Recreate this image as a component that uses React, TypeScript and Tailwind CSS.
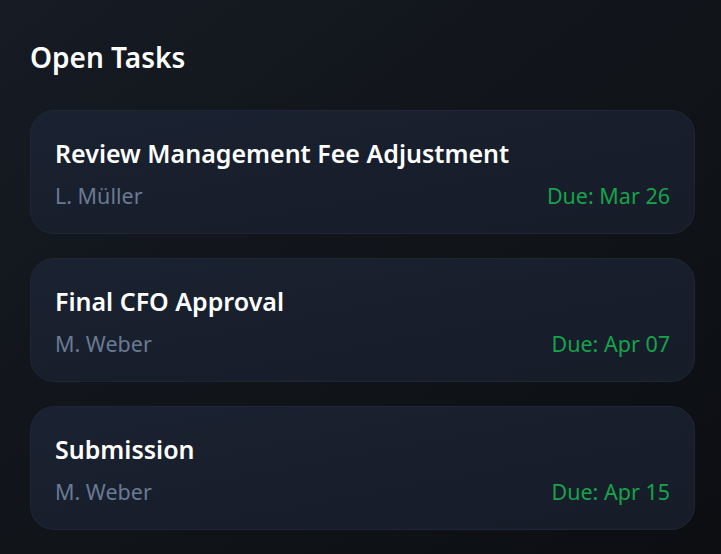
const tasks = [
  { title: "Review Management Fee Adjustment", owner: "L. Müller", due: "Mar 26" },
  { title: "Final CFO Approval", owner: "M. Weber", due: "Apr 07" },
  { title: "Submission", owner: "M. Weber", due: "Apr 15" },
];

export default function App() {
  return (
    <div className="min-h-[554px] bg-gradient-to-br from-[#161b24] via-[#111419] to-[#0c0e12] pl-[30px] pr-[26px] pt-[36px] pb-6 font-['Noto_Sans',sans-serif]">
      <h2 className="text-[28px] leading-[42px] font-semibold text-white">Open Tasks</h2>
      <div className="mt-[32px] flex flex-col gap-6">
        {tasks.map((t) => (
          <div
            key={t.title}
            className="rounded-3xl border border-[#1f2636] bg-gradient-to-br from-[#1a2130] to-[#161c28] px-6 pt-6 pb-[22px]"
          >
            <div className="text-[25px] leading-[36px] font-semibold text-white">{t.title}</div>
            <div className="mt-[10px] flex items-center justify-between text-[21.5px] leading-[30px]">
              <span className="text-[#687a94]">{t.owner}</span>
              <span className="text-[#16a34a]">Due: {t.due}</span>
            </div>
          </div>
        ))}
      </div>
    </div>
  );
}
